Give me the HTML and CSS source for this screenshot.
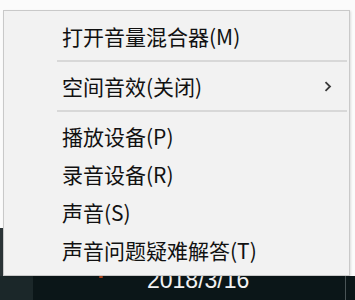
FILE: index.html
```html
<!DOCTYPE html>
<html lang="zh-CN">
<head>
<meta charset="utf-8">
<link rel="stylesheet" href="styles.css">
</head>
<body>
<div class="desktop">
  <div class="backdrop">
    <div class="window-edge"></div>
  </div>
  <div class="taskbar">
    <div class="task-left"></div>
    <div class="task-dot"></div>
    <div class="clock">2018/3/16</div>
    <div class="task-line"></div>
  </div>

  <div class="menu">
    <div class="item"><span class="label">打开音量混合器(M)</span></div>
    <div class="sep"></div>
    <div class="item">
      <span class="label">空间音效(关闭)</span>
      <svg class="chev" width="8" height="11" viewBox="0 0 8 11"><path d="M1.5 1.2 L6 5.5 L1.5 9.8" fill="none" stroke="#3a3a3a" stroke-width="1.8"/></svg>
    </div>
    <div class="sep"></div>
    <div class="item"><span class="label">播放设备(P)</span></div>
    <div class="item"><span class="label">录音设备(R)</span></div>
    <div class="item"><span class="label">声音(S)</span></div>
    <div class="item"><span class="label">声音问题疑难解答(T)</span></div>
  </div>
</div>
</body>
</html>
```

FILE: styles.css
```css
html, body {
  margin: 0;
  padding: 0;
  background: #fafafa;
}

.desktop {
  position: relative;
  width: 355px;
  height: 300px;
  overflow: hidden;
  display: flex;
  flex-direction: column;
  font-family: "Noto Sans CJK SC", "Noto Sans", sans-serif;
}

.backdrop {
  flex: 1;
  background: #fbfbfb;
  display: flex;
  flex-direction: column;
  justify-content: flex-end;
}

.window-edge {
  width: 4px;
  height: 48px;
  background: #2b3436;
}

.taskbar {
  height: 24px;
  background: #0b1618;
  display: flex;
  align-items: flex-end;
  position: relative;
}

.task-left {
  width: 33px;
  height: 100%;
  background: #1b2729;
}

.task-dot {
  position: absolute;
  left: 99px;
  top: 0;
  width: 4px;
  height: 2px;
  background: #b5461c;
  border-radius: 1px;
}

.clock {
  position: absolute;
  left: 147px;
  top: -9px;
  color: #f2f2f2;
  font-family: "Liberation Sans", sans-serif;
  font-size: 23px;
  line-height: 27px;
}

.task-line {
  position: absolute;
  left: 345px;
  top: 0;
  width: 1px;
  height: 100%;
  background: #4a5456;
}

.menu {
  position: absolute;
  left: 3px;
  top: 10px;
  width: 345px;
  background: #f2f2f2;
  border: 1px solid #c9c9c9;
  padding: 6px 0 6px;
  box-shadow: 1px 1px 2px rgba(0, 0, 0, 0.12);
  display: flex;
  flex-direction: column;
}

.item {
  height: 38px;
  display: flex;
  align-items: center;
  padding-left: 58px;
  padding-right: 17px;
  color: #111;
  font-size: 21px;
}

.label {
  flex: 1;
  line-height: 38px;
  white-space: nowrap;
}

.chev {
  display: block;
}

.sep {
  height: 2px;
  margin: 5px 2px 5px 53px;
  background: #d8d8d8;
}
```
